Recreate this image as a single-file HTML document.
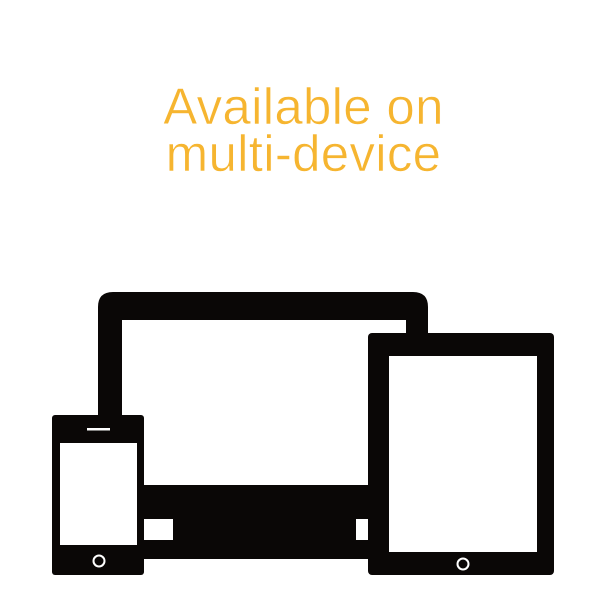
<!DOCTYPE html>
<html><head><style>
html,body{margin:0;padding:0;background:#fff;width:607px;height:612px;overflow:hidden}
.t{position:absolute;left:0;width:607px;text-align:center;color:#f6b530;font-family:"Liberation Sans",sans-serif;font-size:51px;line-height:47px;letter-spacing:0.3px;-webkit-text-stroke:0.6px #fff}
</style></head><body>
<div class="t" style="top:83px">Available on<br>multi-device</div>
<svg width="607" height="612" style="position:absolute;left:0;top:0" xmlns="http://www.w3.org/2000/svg">
<!-- monitor -->
<path d="M113 292 H413 Q428 292 428 307 V333 H406 V320 H122 V485 H98 V307 Q98 292 113 292 Z" fill="#0a0706"/>
<rect x="144" y="485" width="224" height="74" fill="#0a0706"/>
<rect x="144" y="519" width="29" height="21" fill="#fff"/>
<rect x="356" y="519" width="12" height="21" fill="#fff"/>
<!-- tablet -->
<rect x="368" y="333" width="186" height="242" rx="4" fill="#0a0706"/>
<rect x="389" y="356" width="148" height="196" fill="#fff"/>
<circle cx="463" cy="564" r="5.5" fill="none" stroke="#fff" stroke-width="2"/>
<!-- phone -->
<rect x="52" y="415" width="92" height="160" rx="3" fill="#0a0706"/>
<rect x="60" y="443" width="77" height="102" fill="#fff"/>
<rect x="87" y="428" width="23" height="2.5" fill="#fff"/>
<circle cx="99" cy="561" r="5.5" fill="none" stroke="#fff" stroke-width="2"/>
</svg>
</body></html>
